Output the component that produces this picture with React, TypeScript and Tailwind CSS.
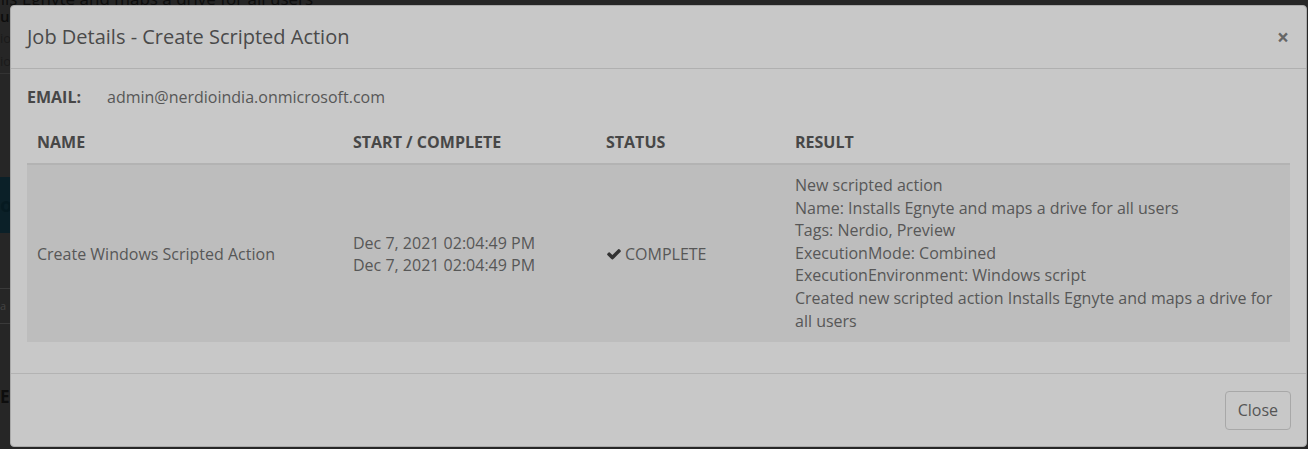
const resultLines = [
  "New scripted action",
  "Name: Installs Egnyte and maps a drive for all users",
  "Tags: Nerdio, Preview",
  "ExecutionMode: Combined",
  "ExecutionEnvironment: Windows script",
  "Created new scripted action Installs Egnyte and maps a drive for all users",
];

function CheckIcon() {
  return (
    <svg viewBox="0 0 1792 1792" className="h-[16px] w-[16px] fill-[#333]">
      <path d="M1671 566q0 40-28 68l-724 724-136 136q-28 28-68 28t-68-28l-136-136-362-362q-28-28-28-68t28-68l136-136q28-28 68-28t68 28l294 295 656-657q28-28 68-28t68 28l136 136q28 28 28 68z" />
    </svg>
  );
}

export default function App() {
  return (
    <div
      className="relative h-[449px] w-full overflow-hidden bg-[#262626] text-[16px]"
      style={{ fontFamily: '"Open Sans", "Liberation Sans", sans-serif' }}
    >
      {/* page behind the overlay */}
      <div className="flex flex-col text-[#0d0d0d]">
        <div className="-ml-[38px] -mt-[13px] h-[18px] whitespace-nowrap text-[17px] leading-[24px]">
          Installs Egnyte and maps a drive for all users
        </div>
        <div className="flex w-[10px] flex-col overflow-hidden">
          <div className="h-[22px] text-[15px] leading-[22px] font-semibold">us</div>
          <div className="h-[23px] text-[13px] leading-[23px] text-[#1a1a1a]">io</div>
          <div className="h-[23px] text-[13px] leading-[23px] text-[#1a1a1a]">io</div>
          <div className="h-[1px] bg-[#333]" />
          <div className="h-[103px]" />
          <div className="flex h-[56px] items-center bg-[#0b2028] text-[20px] font-bold text-[#061a21]">oc</div>
          <div className="h-[55px]" />
          <div className="h-[1px] bg-[#3a3a3a]" />
          <div className="h-[34px] text-[11px] leading-[34px] text-[#444]">a</div>
          <div className="h-[1px] bg-[#3a3a3a]" />
          <div className="h-[60px]" />
          <div className="text-[17px] font-bold">E</div>
        </div>
      </div>

      {/* modal */}
      <div className="absolute left-[10px] top-[5px] flex h-[442px] w-[1297px] flex-col rounded-[4px] border border-[#a9a9a9] bg-[#c8c8c8] text-[#575757]">
        <div className="flex h-[63px] items-center justify-between border-b border-[#b0b0b0] pl-[16px] pr-[17px]">
          <h4 className="text-[20px] text-[#4a4a4a]">Job Details - Create Scripted Action</h4>
          <span className="text-[21px] leading-none font-bold text-[#666]">×</span>
        </div>

        <div className="flex-1 px-[16px] pt-[16px]">
          <div className="flex h-[24px] items-center">
            <span className="w-[80px] font-bold text-[#474747]">EMAIL:</span>
            <span>admin@nerdioindia.onmicrosoft.com</span>
          </div>

          <table className="mt-[12px] w-full border-collapse">
            <thead>
              <tr className="border-b-2 border-[#b3b3b3] text-left text-[#474747]">
                <th className="w-[316px] px-[10px] py-[10px] leading-[22px] font-bold">NAME</th>
                <th className="w-[253px] px-[10px] py-[10px] leading-[22px] font-bold">START / COMPLETE</th>
                <th className="w-[189px] px-[10px] py-[10px] leading-[22px] font-bold">STATUS</th>
                <th className="px-[10px] py-[10px] leading-[22px] font-bold">RESULT</th>
              </tr>
            </thead>
            <tbody>
              <tr className="bg-[#bdbdbd] align-middle">
                <td className="px-[10px] py-[10px] leading-[22px]">Create Windows Scripted Action</td>
                <td className="px-[10px] py-[10px] leading-[22px]">
                  <div>Dec 7, 2021 02:04:49 PM</div>
                  <div>Dec 7, 2021 02:04:49 PM</div>
                </td>
                <td className="px-[10px] py-[10px] leading-[22px]">
                  <span className="flex items-center gap-[3px]">
                    <CheckIcon />
                    COMPLETE
                  </span>
                </td>
                <td className="px-[10px] pt-[9px] pb-[10px] leading-[22.6px]">
                  {resultLines.map((line) => (
                    <div key={line}>{line}</div>
                  ))}
                </td>
              </tr>
            </tbody>
          </table>
        </div>

        <div className="flex h-[73px] items-center justify-end border-t border-[#b3b3b3] pr-[15px]">
          <button className="h-[39px] rounded-[4px] border border-[#a8a8a8] px-[12px] text-[16px] text-[#555]">
            Close
          </button>
        </div>
      </div>
    </div>
  );
}
